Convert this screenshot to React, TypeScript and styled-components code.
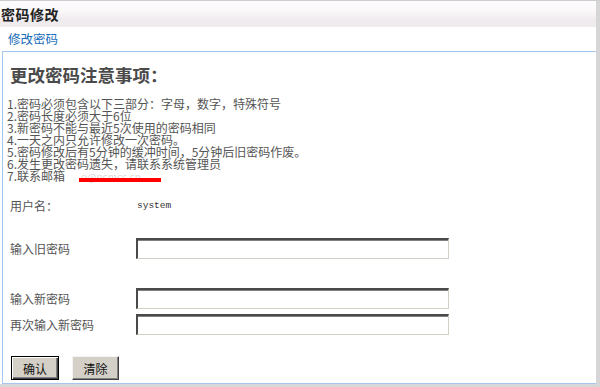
import React from "react";
import styled, { createGlobalStyle } from "styled-components";

const GlobalStyle = createGlobalStyle`
  html, body {
    margin: 0;
    padding: 0;
    background: #ffffff;
  }
  body {
    font-family: "Noto Sans CJK SC", "Liberation Sans", sans-serif;
    font-size: 12px;
    color: #555;
  }
`;

const Frame = styled.div`
  width: 600px;
  height: 387px;
  box-sizing: border-box;
  border-top: 1px solid #cccccc;
  border-right: 4px solid #d6d6d6;
  border-bottom: 3px solid #d8d8d8;
  display: flex;
  flex-direction: column;
  overflow: hidden;
`;

const Header = styled.div`
  height: 26px;
  flex-shrink: 0;
  display: flex;
  align-items: center;
  padding-left: 1px;
  background: linear-gradient(#fefbfe 0%, #fbf8fa 35%, #f6f2f4 55%, #efebee 70%, #efebee 100%);
`;

const Title = styled.h1`
  margin: 0;
  font-size: 14px;
  line-height: 26px;
  font-weight: bold;
  color: #222;
  letter-spacing: 0.5px;
`;

const SubNav = styled.div`
  height: 24px;
  flex-shrink: 0;
  display: flex;
  align-items: center;
  padding-left: 8px;
`;

const NavLink = styled.a`
  font-size: 12.5px;
  line-height: 24px;
  color: #1a6dba;
  text-decoration: none;
`;

const Panel = styled.div`
  flex: 1;
  margin-left: 2px;
  border-top: 1px solid #a5c7ef;
  border-left: 1px solid #a5c7ef;
  border-bottom: 1px solid #a5c7ef;
  display: flex;
  flex-direction: column;
`;

const Heading = styled.h2`
  margin: 13px 0 0 7px;
  font-size: 17.5px;
  line-height: 20px;
  font-weight: 600;
  color: #4a4a4a;
`;

const Notes = styled.ol`
  list-style: none;
  margin: 13px 0 0 4px;
  padding: 0;
  font-size: 12px;
  line-height: 12px;
  color: #555;
`;

const Note = styled.li`
  position: relative;
  white-space: nowrap;
`;

const Mail = styled.span`
  margin-left: 16px;
  font-size: 10px;
  color: #dcdcdc;
`;

const Redact = styled.span`
  position: absolute;
  left: 72px;
  top: 8px;
  width: 82px;
  height: 4px;
  background: #ff0000;
`;

const Row = styled.div<{ $h: number; $top: number }>`
  display: grid;
  grid-template-columns: 126px 313px;
  align-items: center;
  height: ${(p) => p.$h}px;
  margin-top: ${(p) => p.$top}px;
  padding-left: 7px;
`;

const Label = styled.label`
  font-size: 12px;
  color: #555;
`;

const Value = styled.span`
  font-family: "Liberation Mono", "DejaVu Sans Mono", monospace;
  font-size: 9.5px;
  color: #333;
  padding-left: 1px;
`;

const Field = styled.input`
  width: 313px;
  height: 21px;
  box-sizing: border-box;
  margin: 0;
  padding: 0 3px;
  background: #fff;
  border-style: solid;
  border-width: 2px 1px 1px 2px;
  border-color: #4a4a4a #d4d0c8 #d4d0c8 #4a4a4a;
  box-shadow: inset 0 1px 0 #808080;
  outline: none;
`;

const Actions = styled.div`
  display: flex;
  gap: 13px;
  margin-top: 19px;
  padding-left: 8px;
`;

const Button = styled.button<{ $primary?: boolean }>`
  width: ${(p) => (p.$primary ? 48 : 47)}px;
  height: 24px;
  box-sizing: border-box;
  margin: 0;
  padding: 0;
  font-family: "Noto Sans CJK SC", sans-serif;
  font-size: 12px;
  color: #111;
  background: #d4d0c8;
  border: 1px solid;
  border-color: ${(p) => (p.$primary ? "#000" : "#f4f4f4 #404040 #404040 #f4f4f4")};
  box-shadow: ${(p) =>
    p.$primary
      ? "inset 1px 1px 0 #fff, inset -1px -1px 0 #404040, inset -2px -2px 0 #808080"
      : "inset -1px -1px 0 #808080"};
`;

const notes = [
  "1.密码必须包含以下三部分：字母，数字，特殊符号",
  "2.密码长度必须大于6位",
  "3.新密码不能与最近5次使用的密码相同",
  "4.一天之内只允许修改一次密码。",
  "5.密码修改后有5分钟的缓冲时间，5分钟后旧密码作废。",
  "6.发生更改密码遗失，请联系系统管理员",
];

export default function App() {
  return (
    <>
      <GlobalStyle />
      <Frame>
        <Header>
          <Title>密码修改</Title>
        </Header>
        <SubNav>
          <NavLink href="#">修改密码</NavLink>
        </SubNav>
        <Panel>
          <Heading>更改密码注意事项：</Heading>
          <Notes>
            {notes.map((n) => (
              <Note key={n}>{n}</Note>
            ))}
            <Note>
              7.联系邮箱<Mail>o@ncmcc.cn</Mail>
              <Redact />
            </Note>
          </Notes>
          <Row $h={24} $top={10}>
            <Label>用户名：</Label>
            <Value>system</Value>
          </Row>
          <Row $h={27} $top={18}>
            <Label>输入旧密码</Label>
            <Field type="password" />
          </Row>
          <Row $h={26} $top={23}>
            <Label>输入新密码</Label>
            <Field type="password" />
          </Row>
          <Row $h={26} $top={0}>
            <Label>再次输入新密码</Label>
            <Field type="password" />
          </Row>
          <Actions>
            <Button $primary>确认</Button>
            <Button>清除</Button>
          </Actions>
        </Panel>
      </Frame>
    </>
  );
}
